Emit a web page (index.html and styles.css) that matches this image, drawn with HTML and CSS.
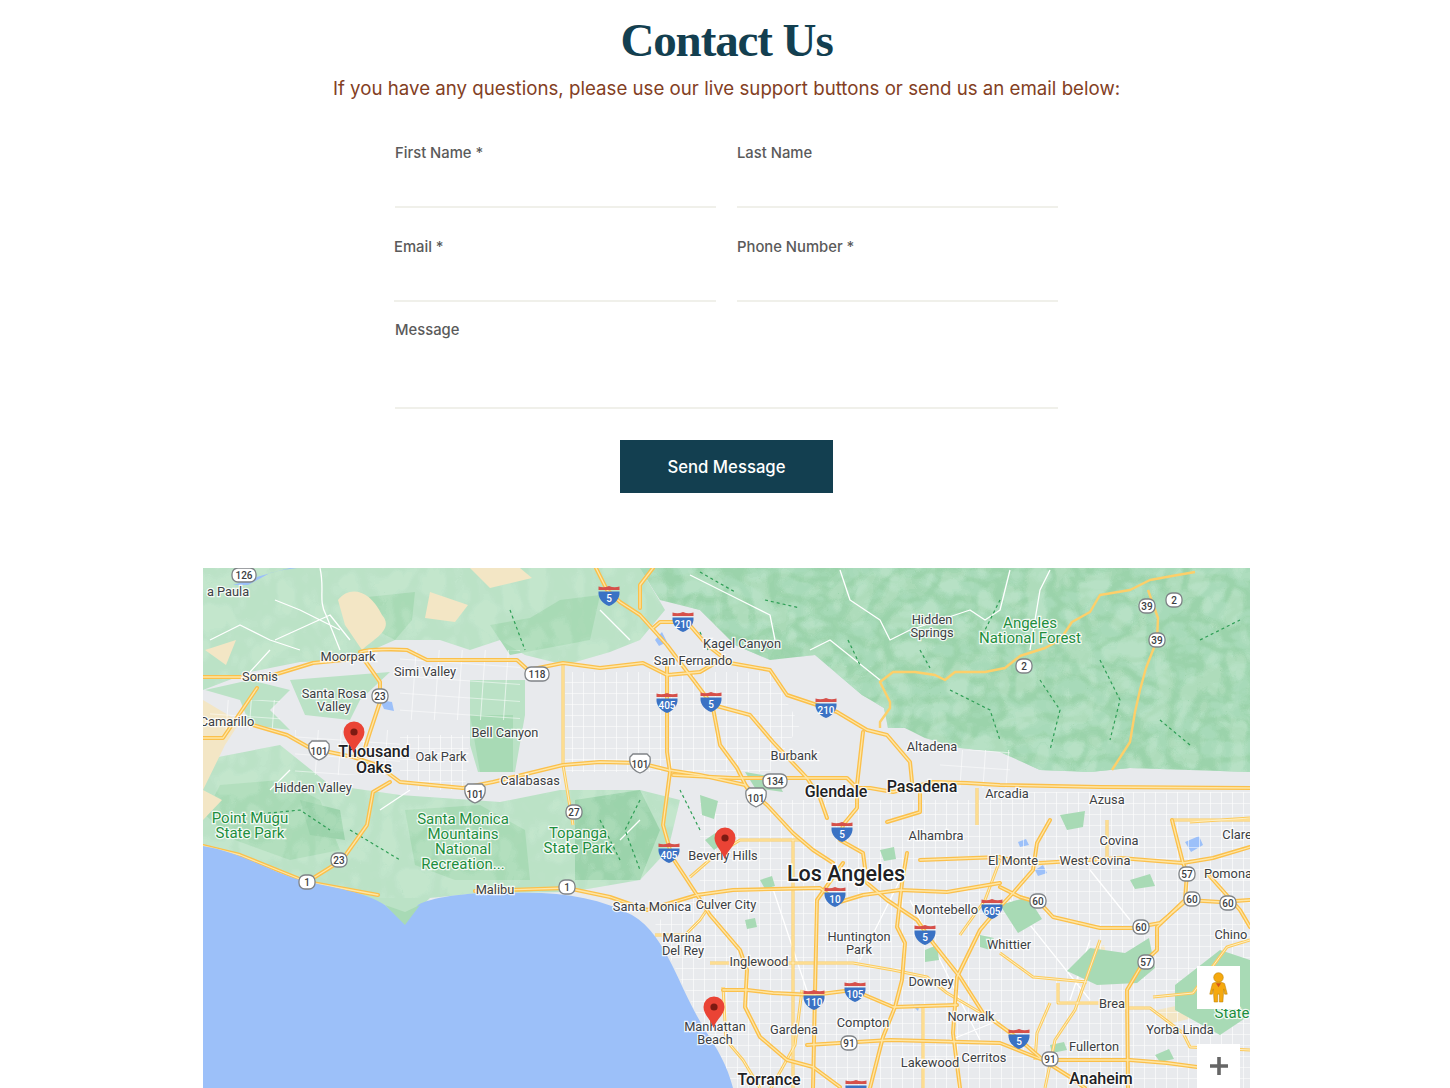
FILE: index.html
```html
<!DOCTYPE html>
<html lang="en">
<head>
<meta charset="utf-8">
<title>Contact Us</title>
<link rel="stylesheet" href="styles.css">
</head>
<body>
<main class="page">
  <header class="intro">
    <h1 class="title">Contact Us</h1>
    <p class="lead">If you have any questions, please use our live support buttons or send us an email below:</p>
  </header>
  <form class="form">
    <div class="row">
      <label class="field"><span class="label">First Name *</span><input class="input" type="text"></label>
      <label class="field"><span class="label">Last Name</span><input class="input" type="text"></label>
    </div>
    <div class="row">
      <label class="field field-shift"><span class="label">Email *</span><input class="input" type="email"></label>
      <label class="field"><span class="label">Phone Number *</span><input class="input" type="tel"></label>
    </div>
    <label class="field field-message"><span class="label">Message</span><textarea class="input area"></textarea></label>
    <button class="send" type="button">Send Message</button>
  </form>
  <section class="map">
    <svg class="map-svg" viewBox="203 568 1047 520" width="1047" height="520" xmlns="http://www.w3.org/2000/svg">
      <defs>
        <pattern id="grid" width="11" height="11" patternUnits="userSpaceOnUse">
          <path d="M0 0H11M0 0V11" class="grid-line"/>
        </pattern>
        <pattern id="gridc" width="23" height="17" patternUnits="userSpaceOnUse" patternTransform="rotate(4)">
          <path d="M0 0H23M0 0V17" class="grid-line"/>
        </pattern>
        <filter id="reliefDark" x="0" y="0" width="100%" height="100%">
          <feTurbulence type="turbulence" baseFrequency="0.035 0.05" numOctaves="2" seed="11"/>
          <feColorMatrix values="0 0 0 0 0.42  0 0 0 0 0.72  0 0 0 0 0.52  2.2 0 0 0 0"/>
          <feComponentTransfer><feFuncA type="discrete" tableValues="0 0 .25 .55 .8 1"/></feComponentTransfer>
        </filter>
        <filter id="reliefLight" x="0" y="0" width="100%" height="100%">
          <feTurbulence type="turbulence" baseFrequency="0.04 0.03" numOctaves="2" seed="4"/>
          <feColorMatrix values="0 0 0 0 0.78  0 0 0 0 0.92  0 0 0 0 0.82  2.2 0 0 0 0"/>
          <feComponentTransfer><feFuncA type="discrete" tableValues="0 0 .2 .5 .8 1"/></feComponentTransfer>
        </filter>
        <clipPath id="mtn"><path d="M640 568H1250V772L1130 768 1090 772 1040 770 1000 752 960 748 925 738 905 728 888 728 884 708 862 695 815 655 770 660 735 645 700 610 660 600Z"/></clipPath>
        <clipPath id="hills"><path d="M203 568H640L665 610 640 640 610 652 565 665 525 655 500 640 470 650 440 640 395 640 350 660 300 662 250 672 203 690ZM203 760 280 745 330 785 400 795 500 802 560 790 640 790 680 800 668 850 640 880 570 892 480 893 430 898 405 922 385 905 300 878 240 855 203 845Z"/></clipPath>
        <g id="shI"><path d="M-10.5-4.5H10.5C11 2 7 7.500 0 10-7 7.500-11 2-10.5-4.500Z" class="s-blue"/><path d="M-10.500-9.500C-7-8.500-3.500-8.500 0-10 3.500-8.500 7-8.500 10.500-9.500V-6H-10.500Z" class="s-red"/></g>
        <g id="shU"><path d="M-10-7-7-10H7L10-7C11 0 8 6 0 9-8 6-11 0-10-7Z" class="s-white"/></g>
        <g id="shS2"><rect x="-8" y="-7" width="16" height="14" rx="6" class="s-white"/></g>
        <g id="shW"><rect x="-12" y="-7" width="24" height="14" rx="6" class="s-white"/></g>
        <g id="pin"><path d="M0 0C-2-8-10-13-10-21A10.500 10.500 0 0 1 11-21C11-13 2-8 0 0Z" class="pin-body"/><circle cx="0.500" cy="-21" r="3.600" class="pin-dot"/></g>
        <g id="fwy">
          <path d="M203 677H267L313 663 363 658M360 652C370 649 395 649 407 650L427 660H517L528 670 563 663 600 668 643 663 667 675 700 672 717 662"/>
          <path d="M363 658 380 682V702L370 732 365 748"/>
          <path d="M203 738H223L257 688M253 725 287 735 310 748 353 757 377 765 400 782 463 788 493 782 563 765 600 762 640 763 668 770 700 775 745 785 757 797"/>
          <path d="M390 782 373 792 367 825 342 860 307 882"/>
          <path d="M203 846 240 855 307 882 378 895M475 891 567 888 610 897 647 910"/>
          <path d="M596 568 607 590 620 602 640 615 667 645 710 702"/>
          <path d="M653 568 640 585V608"/>
          <path d="M653 628 660 622H687L707 645 730 663 770 670 787 695 817 705 837 712 867 730 887 735 910 762 912 782"/>
          <path d="M667 665V752L670 772 663 825 672 857 697 895 710 915 740 950 747 970 745 1007 760 1037 787 1060 813 1067 840 1087"/>
          <path d="M713 705 750 715 773 742 807 778 820 798 827 818"/>
          <path d="M713 708 720 745 737 768 747 788 767 805 793 833 813 850 833 863"/>
          <path d="M673 775 733 778H847L857 788 870 788 893 792 933 782 967 783 1000 785 1100 787 1250 788"/>
          <path d="M863 732 857 785V808L843 825 840 840 863 853 867 883 887 900 917 920 933 943 960 977 983 1013 1020 1040 1043 1060 1070 1077 1085 1088"/>
          <path d="M920 785V812L887 822"/>
          <path d="M647 910 697 895 733 890 820 888 833 898 840 902 863 895 900 890 947 892 1000 883"/>
          <path d="M843 863 817 900 815 993 813 1088"/>
          <path d="M907 853 902 883 897 927 905 943 902 980 895 1007 883 1037 870 1088"/>
          <path d="M723 990H747L773 993 813 995 853 990 893 1007 957 1005"/>
          <path d="M807 1045 890 1040 1000 1043 1043 1060H1130L1167 1063 1197 1067"/>
          <path d="M1050 820 1037 843 1033 870 1013 893 997 910 980 930 957 977 953 1033 960 1088"/>
          <path d="M1000 887 1020 897 1040 903 1053 917 1100 928H1133L1160 923 1187 900 1220 902 1250 900"/>
          <path d="M1000 858 1040 863 1120 858 1183 863 1213 858 1250 847M920 860 1000 857"/>
          <path d="M1172 820 1183 863 1187 873 1185 900 1157 927V950L1143 963 1127 990 1128 1088"/>
          <path d="M1207 873 1240 910 1250 927"/>
        </g>
        <g id="art">
          <path d="M690 877 713 857 740 840H800"/>
          <path d="M710 963H853L893 970 927 977 947 993 993 1020"/>
          <path d="M793 840V1088"/>
          <path d="M723 987 726 1040 743 1060 760 1088"/>
          <path d="M923 1005V1088"/>
          <path d="M977 788V825"/>
          <path d="M1107 820V858"/>
          <path d="M1000 953 1033 977 1087 982M1058 983V1003H1127"/>
          <path d="M1050 1003 1037 1033 1035 1060"/>
          <path d="M1127 1008H1150L1183 1033 1190 1047 1250 1050"/>
          <path d="M1153 997 1193 993 1227 947 1250 940"/>
          <path d="M563 665V765L573 825"/>
          <path d="M770 1090 795 1045 802 990"/>
          <path d="M1000 860 985 900 960 935M1190 822 1250 818M1172 820H1250"/>
          <path d="M710 905 700 920 685 935 655 935"/>
          <path d="M1045 1088 1055 1040 1075 1010 1100 940"/>
        </g>
        <g id="trail"><path d="M880 728 880 722 890 708V702L880 682 893 672 915 672 935 675 945 680 955 672 985 672 1005 668 1020 656 1045 648 1060 640 1072 622 1090 612 1100 595 1130 590 1150 580 1172 576 1195 572M1148 590 1158 618 1157 640 1146 668 1140 690 1135 712 1130 742 1112 770"/></g>
      </defs>

      <rect x="203" y="568" width="1047" height="520" class="land"/>

      <path d="M203 568H640L665 610 640 640 610 652 565 665 525 655 500 640 470 650 440 640 395 640 350 660 300 662 250 672 203 690ZM203 760 280 745 330 785 400 795 500 802 560 790 640 790 680 800 668 850 640 880 570 892 480 893 430 898 405 922 385 905 300 878 240 855 203 845Z" class="green-l"/>
      <path d="M470 680H525V715L515 772H478L470 745ZM205 690 250 680 290 690 270 710 290 730 250 725 240 700ZM290 680 390 672 360 700 350 720 305 715Z" class="green-l"/>
      <path d="M470 715H513V772H480ZM358 598 415 592 412 620 395 640 360 622ZM490 625 530 618 560 600 600 595 590 640 510 655ZM220 785 280 780 320 800 340 850 290 860 235 840 205 815ZM405 810 480 805 525 830 530 880 455 880 415 865Z" class="green-m"/>
      <path d="M575 800 640 790 660 830 640 880 575 880ZM300 800 340 810 345 840 310 835Z" class="green-d"/>
      <rect x="203" y="568" width="480" height="330" clip-path="url(#hills)" filter="url(#reliefLight)" class="relief-soft"/>

      <path d="M640 568H1250V772L1130 768 1090 772 1040 770 1000 752 960 748 925 738 905 728 888 728 884 708 862 695 815 655 770 660 735 645 700 610 660 600Z" class="green-d"/>
      <g clip-path="url(#mtn)">
        <rect x="640" y="568" width="610" height="210" filter="url(#reliefDark)" class="relief"/>
        <rect x="640" y="568" width="610" height="210" filter="url(#reliefLight)" class="relief-l"/>
      </g>

      <path d="M338 600C350 585 370 590 382 615 395 630 372 640 362 650L345 625ZM203 700 240 722 225 745 203 790ZM203 790 222 800 203 820ZM430 592 468 605 455 622 425 618ZM470 568H520L532 578 490 588ZM205 650 236 640 226 665ZM1157 1010l28-6 8 14-26 6ZM1090 950l14-5 4 16-14 3Z" class="sand"/>
      <path d="M233 585C255 578 275 570 297 568H290L270 573 248 585ZM1035 870l8-5 4 8-9 3ZM1185 842l14-6 4 9-12 7ZM1018 842l8-3 3 6-9 2ZM380 700l12 2 2 9-10-2ZM655 640l7-8 5 10-8 4ZM912 1005l8-1-2 7Z" class="water"/>

      <path d="M565 672H770L800 725 770 772 565 772ZM700 800H1250V1088H730L690 1000 655 925 700 880ZM1010 792H1250V800H1010ZM400 735H470L465 790H400Z" fill="url(#grid)"/>
      <path d="M210 700H280V730H210ZM295 730H400V775H295ZM940 750H1010V788H940ZM400 650H520V720H400Z" fill="url(#gridc)"/>

      <path d="M320 568C325 590 318 600 326 615L340 650M275 600 300 610 340 630M210 640 240 625 270 640 300 650M250 672 270 650M275 640 330 615 350 640M600 610 630 640M840 570 850 600 880 620 890 640 910 630 940 620 970 610 985 620 1000 610 1010 570M690 575 740 600 770 615 775 640M810 650 830 640 855 660 880 680M1050 570 1040 590 1030 650M290 770 270 790M380 810 410 790M620 840 640 820M1070 1000 1090 940M950 1040 1000 1020M770 880 810 1000M910 900 980 1040M1010 900 1090 1000M1090 870 1130 920M860 960 900 880" class="minor"/>
      <path d="M700 572 735 592M765 600 800 608M700 632 708 650M848 640 860 665M920 650 930 668M950 690 990 710 1000 740M1100 660 1120 700 1110 740M1040 680 1060 710 1050 750M1160 720 1190 745M980 640 1000 600M1200 640 1240 620M510 610 525 650M640 800 625 830 640 870M600 820 620 860M700 830 680 790M250 815 300 810 330 830M350 830 400 860" class="park-trail"/>
      <path d="M705 840l15-10 6 12-12 8ZM700 795l18 6-4 18-12-4ZM745 772l30 5 8 15-28-4ZM1060 815l25-4-2 16-16 3ZM1000 905l28-8 14 22-24 14ZM1090 948l35 5 24-15 6 30-18 15-40 2-30-14ZM1175 985l45-35 30 10v55l-30 20-45-25ZM1130 880l20-6 5 12-20 3ZM925 950l12-5 2 15-14 2ZM980 935l14 3-4 12-10-3ZM1155 1055l14-6 5 10-14 3ZM800 1000ZM1050 1045l14-3 3 8-15 3ZM880 850l14-3 2 12-12 2ZM760 880l12-4 3 10-10 3ZM745 920l10-2 2 9-10 2Z" class="green-m"/>

      <use href="#art" class="art-edge"/>
      <use href="#art" class="art-core"/>
      <use href="#fwy" class="road-edge"/>
      <use href="#fwy" class="road-core"/>
      <use href="#trail" class="road-thin"/>

      <path d="M203 846C240 852 262 868 300 880 335 888 365 892 385 905L405 923 418 905C432 897 470 892 510 893 560 891 600 898 632 915 650 925 662 945 672 965 682 985 690 1005 705 1030 718 1050 727 1065 733 1088H203Z" class="sea"/>
      <path d="M385 905 405 925 420 905 405 912Z" class="green-m"/>

      <g class="labels">
        <text x="228" y="596">a Paula</text>
        <text x="348" y="661">Moorpark</text>
        <text x="425" y="676">Simi Valley</text>
        <text x="260" y="681">Somis</text>
        <text x="334" y="698">Santa Rosa</text>
        <text x="334" y="711">Valley</text>
        <text x="227" y="726">Camarillo</text>
        <text x="441" y="761">Oak Park</text>
        <text x="505" y="737">Bell Canyon</text>
        <text x="530" y="785">Calabasas</text>
        <text x="313" y="792">Hidden Valley</text>
        <text x="495" y="894">Malibu</text>
        <text x="652" y="911">Santa Monica</text>
        <text x="726" y="909">Culver City</text>
        <text x="682" y="942">Marina</text>
        <text x="683" y="955">Del Rey</text>
        <text x="759" y="966">Inglewood</text>
        <text x="859" y="941">Huntington</text>
        <text x="859" y="954">Park</text>
        <text x="936" y="840">Alhambra</text>
        <text x="946" y="914">Montebello</text>
        <text x="1009" y="949">Whittier</text>
        <text x="931" y="986">Downey</text>
        <text x="971" y="1021">Norwalk</text>
        <text x="863" y="1027">Compton</text>
        <text x="794" y="1034">Gardena</text>
        <text x="930" y="1067">Lakewood</text>
        <text x="984" y="1062">Cerritos</text>
        <text x="1094" y="1051">Fullerton</text>
        <text x="1180" y="1034">Yorba Linda</text>
        <text x="1112" y="1008">Brea</text>
        <text x="1237" y="939">Chino H</text>
        <text x="1228" y="878">Pomona</text>
        <text x="1095" y="865">West Covina</text>
        <text x="1013" y="865">El Monte</text>
        <text x="1119" y="845">Covina</text>
        <text x="1237" y="839">Clare</text>
        <text x="1107" y="804">Azusa</text>
        <text x="1007" y="798">Arcadia</text>
        <text x="932" y="751">Altadena</text>
        <text x="794" y="760">Burbank</text>
        <text x="742" y="648">Kagel Canyon</text>
        <text x="693" y="665">San Fernando</text>
        <text x="932" y="624">Hidden</text>
        <text x="932" y="637">Springs</text>
      </g>
      <g class="labels labels-green">
        <text x="250" y="823">Point Mugu</text>
        <text x="250" y="838">State Park</text>
        <text x="463" y="824">Santa Monica</text>
        <text x="463" y="839">Mountains</text>
        <text x="463" y="854">National</text>
        <text x="463" y="869">Recreation...</text>
        <text x="578" y="838">Topanga</text>
        <text x="578" y="853">State Park</text>
        <text x="1030" y="628">Angeles</text>
        <text x="1030" y="643">National Forest</text>
        <text x="1232" y="1018">State</text>
      </g>

      <g class="shields">
        <use href="#shI" x="609" y="596"/><text x="609" y="602">5</text>
        <use href="#shI" x="683" y="622"/><text x="683" y="628">210</text>
        <use href="#shI" x="667" y="703"/><text x="667" y="709">405</text>
        <use href="#shI" x="711" y="702"/><text x="711" y="708">5</text>
        <use href="#shI" x="826" y="708"/><text x="826" y="714">210</text>
        <use href="#shI" x="669" y="853"/><text x="669" y="859">405</text>
        <use href="#shI" x="842" y="832"/><text x="842" y="838">5</text>
        <use href="#shI" x="835" y="897"/><text x="835" y="903">10</text>
        <use href="#shI" x="992" y="909"/><text x="992" y="915">605</text>
        <use href="#shI" x="925" y="935"/><text x="925" y="941">5</text>
        <use href="#shI" x="855" y="992"/><text x="855" y="998">105</text>
        <use href="#shI" x="814" y="1000"/><text x="814" y="1006">110</text>
        <use href="#shI" x="1019" y="1039"/><text x="1019" y="1045">5</text>
        <use href="#shI" x="856" y="1090"/>
      </g>
      <g class="shields shields-w">
        <use href="#shW" x="244" y="575"/><text x="244" y="579">126</text>
        <use href="#shW" x="537" y="674"/><text x="537" y="678">118</text>
        <use href="#shS2" x="380" y="696"/><text x="380" y="700">23</text>
        <use href="#shU" x="319" y="751"/><text x="319" y="755">101</text>
        <use href="#shU" x="475" y="794"/><text x="475" y="798">101</text>
        <use href="#shU" x="640" y="764"/><text x="640" y="768">101</text>
        <use href="#shW" x="775" y="781"/><text x="775" y="785">134</text>
        <use href="#shU" x="756" y="798"/><text x="756" y="802">101</text>
        <use href="#shS2" x="574" y="812"/><text x="574" y="816">27</text>
        <use href="#shS2" x="339" y="860"/><text x="339" y="864">23</text>
        <use href="#shS2" x="307" y="882"/><text x="307" y="886">1</text>
        <use href="#shS2" x="567" y="887"/><text x="567" y="891">1</text>
        <use href="#shS2" x="1038" y="901"/><text x="1038" y="905">60</text>
        <use href="#shS2" x="1192" y="899"/><text x="1192" y="903">60</text>
        <use href="#shS2" x="1228" y="903"/><text x="1228" y="907">60</text>
        <use href="#shS2" x="1141" y="927"/><text x="1141" y="931">60</text>
        <use href="#shS2" x="1187" y="874"/><text x="1187" y="878">57</text>
        <use href="#shS2" x="1146" y="962"/><text x="1146" y="966">57</text>
        <use href="#shS2" x="849" y="1043"/><text x="849" y="1047">91</text>
        <use href="#shS2" x="1050" y="1059"/><text x="1050" y="1063">91</text>
        <use href="#shS2" x="1174" y="600"/><text x="1174" y="604">2</text>
        <use href="#shS2" x="1147" y="606"/><text x="1147" y="610">39</text>
        <use href="#shS2" x="1157" y="640"/><text x="1157" y="644">39</text>
        <use href="#shS2" x="1024" y="666"/><text x="1024" y="670">2</text>
      </g>

      <g class="labels labels-big">
        <text x="374" y="757">Thousand</text>
        <text x="374" y="773">Oaks</text>
        <text x="836" y="797">Glendale</text>
        <text x="922" y="792">Pasadena</text>
        <text x="769" y="1085">Torrance</text>
        <text x="1101" y="1084">Anaheim</text>
      </g>
      <g class="labels"><text x="723" y="860">Beverly Hills</text><text x="715" y="1031">Manhattan</text><text x="715" y="1044">Beach</text></g>
      <text x="846" y="881" class="label-la">Los Angeles</text>
      <use href="#pin" x="353.500" y="753"/>
      <use href="#pin" x="724.500" y="859"/>
      <use href="#pin" x="713.500" y="1028"/>
    </svg>
    <button class="map-ctl ctl-peg" type="button" aria-label="Street View">
      <svg viewBox="0 0 24 36" width="21" height="32" xmlns="http://www.w3.org/2000/svg"><circle cx="12" cy="6" r="5.500" class="peg"/><path d="M5 13C7 11 17 11 19 13L22 25H19L18 19 17 34H13V25H11V34H7L6 19 5 25H2Z" class="peg"/><path d="M9 12.500 12 17 15 12.500Z" class="peg-neck"/></svg>
    </button>
    <button class="map-ctl ctl-zoom" type="button" aria-label="Zoom in">
      <svg viewBox="0 0 20 20" width="18" height="18" xmlns="http://www.w3.org/2000/svg"><path d="M8 0H12V8H20V12H12V20H8V12H0V8H8Z" class="plus"/></svg>
    </button>
  </section>
</main>
</body>
</html>
```

FILE: styles.css
```css
* { box-sizing: border-box; }
html, body { margin: 0; padding: 0; background: #fff; overflow: hidden; }
body { height: 1088px; font-family: "Inter", "Noto Sans", sans-serif; }
.page { display: flex; flex-direction: column; align-items: center; width: 1453px; }

.intro { text-align: center; padding-top: 12px; }
.title {
  margin: 0;
  font-family: "Liberation Serif", serif;
  font-weight: 700;
  font-size: 47px;
  letter-spacing: -1.1px;
  line-height: 56px;
  color: #133f50;
}
.lead {
  margin: 7px 0 0;
  font-size: 18.7px;
  line-height: 28px;
  color: #83401f;
}

.form { width: 663px; margin-top: 40px; display: flex; flex-direction: column; }
.row { display: grid; grid-template-columns: 321px 321px; column-gap: 21px; margin-bottom: 29px; }
.field { display: flex; flex-direction: column; }
.field-shift { margin-left: -1px; }
.field-message { margin-top: -11px; }
.label { font-size: 14.8px; font-weight: 500; line-height: 20px; color: #5a5a5a; }
.input {
  display: block;
  width: 100%;
  height: 45px;
  border: 0;
  border-bottom: 2px solid #f0f0ea;
  background: transparent;
  outline: 0;
  resize: none;
  font: inherit;
}
.area { height: 69px; }
.send {
  align-self: center;
  width: 213px;
  height: 53px;
  margin-top: 31px;
  border: 0;
  background: #133f50;
  color: #fff;
  font-family: inherit;
  font-size: 16.7px;
  font-weight: 500;
}

.map { position: relative; width: 1047px; height: 520px; margin-top: 75px; overflow: hidden; }
.map-svg { display: block; }
.land { fill: #e8eaed; }
.green-l { fill: #bbe2c6; }
.green-m { fill: #a8dab5; }
.green-d { fill: #9bd3ab; }
.relief { opacity: .7; }
.relief-l { opacity: .25; }
.relief-soft { opacity: .18; }
.sand { fill: #f3e6c5; }
.water { fill: #9cc0f9; }
.sea { fill: #9cc0f9; }
.grid-line { fill: none; stroke: #fff; stroke-width: 1.2; }
.minor { fill: none; stroke: #fff; stroke-width: 1.3; stroke-linejoin: round; }
.park-trail { fill: none; stroke: #2e9e55; stroke-width: 1.2; stroke-dasharray: 3 3; }
.road-edge { fill: none; stroke: #fbc04b; stroke-width: 4; stroke-linejoin: round; stroke-linecap: round; }
.road-core { fill: none; stroke: #fee6a6; stroke-width: 1.3; stroke-linejoin: round; stroke-linecap: round; }
.art-edge { fill: none; stroke: #fccb5e; stroke-width: 3; stroke-linejoin: round; }
.art-core { fill: none; stroke: #feefc3; stroke-width: 1; stroke-linejoin: round; }
.road-thin { fill: none; stroke: #fdcf6a; stroke-width: 2.4; stroke-linejoin: round; }

.s-blue { fill: #3a72c4; }
.s-red { fill: #d6504a; }
.s-white { fill: #fff; stroke: #7f8387; stroke-width: 1.3; }
.pin-body { fill: #ea4335; }
.pin-dot { fill: #7c1a12; }

.labels text {
  font-family: "Roboto", sans-serif;
  font-size: 12.8px;
  fill: #3c4043;
  text-anchor: middle;
  stroke: #fff;
  stroke-width: 2.5px;
  stroke-opacity: .85;
  paint-order: stroke;
}
.labels-green text { font-size: 15px; fill: #1e8e3e; }
.labels-big text { font-size: 16px; font-weight: 500; fill: #202124; }
.label-la {
  font-family: "Roboto", sans-serif;
  font-size: 21.5px;
  font-weight: 500;
  fill: #202124;
  text-anchor: middle;
  stroke: #fff;
  stroke-width: 3px;
  paint-order: stroke;
}
.shields text { font-family: "Roboto", sans-serif; font-size: 10px; font-weight: 500; fill: #fff; text-anchor: middle; }
.shields-w text { fill: #3c4043; }

.map-ctl {
  position: absolute;
  left: 994px;
  width: 43px;
  height: 43px;
  padding: 0;
  border: 0;
  background: #fff;
  display: flex;
  align-items: center;
  justify-content: center;
}
.ctl-peg { top: 398px; }
.ctl-zoom { top: 476px; height: 44px; }
.peg { fill: #f5a90f; stroke: #b97d00; stroke-width: .6; }
.peg-neck { fill: #d4561a; }
.plus { fill: #666; }
```
